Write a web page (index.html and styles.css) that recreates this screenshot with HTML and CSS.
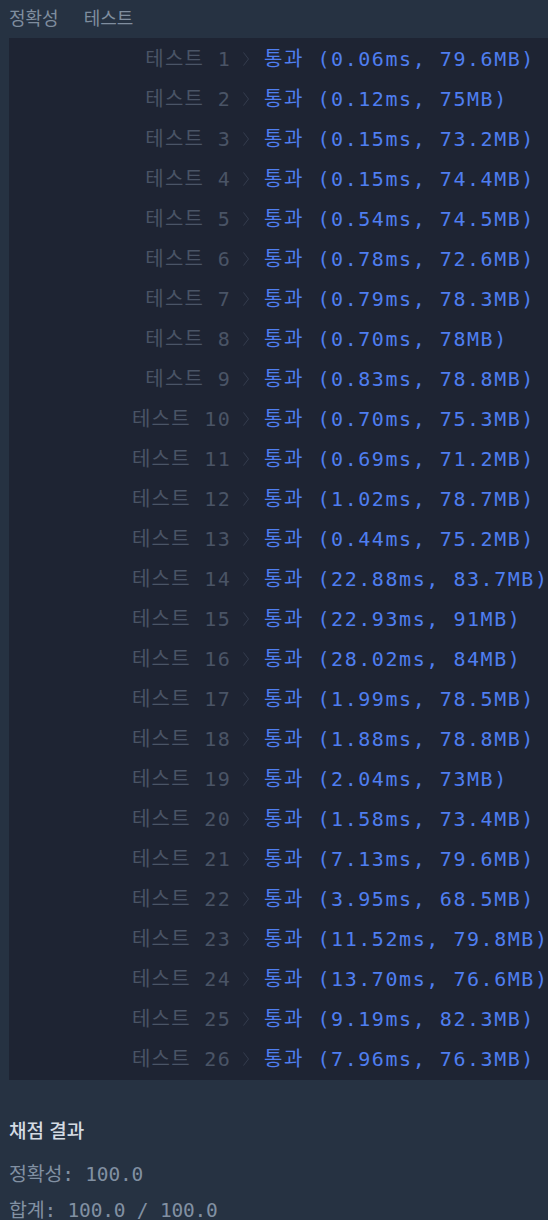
FILE: index.html
```html
<!DOCTYPE html>
<html lang="ko">
<head>
    <meta charset="UTF-8">
    <meta name="viewport" content="width=device-width, initial-scale=1.0">
    <title>채점 결과</title>
    <link rel="stylesheet" href="styles.css">
</head>
<body>

    <nav class="tabs">
        <span class="tab">정확성</span>
        <span class="tab">테스트</span>
    </nav>

    <section class="console">
        <div class="row"><span class="case">테스트 1</span><span class="arrow"><svg viewBox="0 0 6 14"><polyline points="0.5,0.5 5.5,7 0.5,13.5"/></svg></span><span class="result">통과 (0.06ms, 79.6MB)</span></div>
        <div class="row"><span class="case">테스트 2</span><span class="arrow"><svg viewBox="0 0 6 14"><polyline points="0.5,0.5 5.5,7 0.5,13.5"/></svg></span><span class="result">통과 (0.12ms, 75MB)</span></div>
        <div class="row"><span class="case">테스트 3</span><span class="arrow"><svg viewBox="0 0 6 14"><polyline points="0.5,0.5 5.5,7 0.5,13.5"/></svg></span><span class="result">통과 (0.15ms, 73.2MB)</span></div>
        <div class="row"><span class="case">테스트 4</span><span class="arrow"><svg viewBox="0 0 6 14"><polyline points="0.5,0.5 5.5,7 0.5,13.5"/></svg></span><span class="result">통과 (0.15ms, 74.4MB)</span></div>
        <div class="row"><span class="case">테스트 5</span><span class="arrow"><svg viewBox="0 0 6 14"><polyline points="0.5,0.5 5.5,7 0.5,13.5"/></svg></span><span class="result">통과 (0.54ms, 74.5MB)</span></div>
        <div class="row"><span class="case">테스트 6</span><span class="arrow"><svg viewBox="0 0 6 14"><polyline points="0.5,0.5 5.5,7 0.5,13.5"/></svg></span><span class="result">통과 (0.78ms, 72.6MB)</span></div>
        <div class="row"><span class="case">테스트 7</span><span class="arrow"><svg viewBox="0 0 6 14"><polyline points="0.5,0.5 5.5,7 0.5,13.5"/></svg></span><span class="result">통과 (0.79ms, 78.3MB)</span></div>
        <div class="row"><span class="case">테스트 8</span><span class="arrow"><svg viewBox="0 0 6 14"><polyline points="0.5,0.5 5.5,7 0.5,13.5"/></svg></span><span class="result">통과 (0.70ms, 78MB)</span></div>
        <div class="row"><span class="case">테스트 9</span><span class="arrow"><svg viewBox="0 0 6 14"><polyline points="0.5,0.5 5.5,7 0.5,13.5"/></svg></span><span class="result">통과 (0.83ms, 78.8MB)</span></div>
        <div class="row"><span class="case">테스트 10</span><span class="arrow"><svg viewBox="0 0 6 14"><polyline points="0.5,0.5 5.5,7 0.5,13.5"/></svg></span><span class="result">통과 (0.70ms, 75.3MB)</span></div>
        <div class="row"><span class="case">테스트 11</span><span class="arrow"><svg viewBox="0 0 6 14"><polyline points="0.5,0.5 5.5,7 0.5,13.5"/></svg></span><span class="result">통과 (0.69ms, 71.2MB)</span></div>
        <div class="row"><span class="case">테스트 12</span><span class="arrow"><svg viewBox="0 0 6 14"><polyline points="0.5,0.5 5.5,7 0.5,13.5"/></svg></span><span class="result">통과 (1.02ms, 78.7MB)</span></div>
        <div class="row"><span class="case">테스트 13</span><span class="arrow"><svg viewBox="0 0 6 14"><polyline points="0.5,0.5 5.5,7 0.5,13.5"/></svg></span><span class="result">통과 (0.44ms, 75.2MB)</span></div>
        <div class="row"><span class="case">테스트 14</span><span class="arrow"><svg viewBox="0 0 6 14"><polyline points="0.5,0.5 5.5,7 0.5,13.5"/></svg></span><span class="result">통과 (22.88ms, 83.7MB)</span></div>
        <div class="row"><span class="case">테스트 15</span><span class="arrow"><svg viewBox="0 0 6 14"><polyline points="0.5,0.5 5.5,7 0.5,13.5"/></svg></span><span class="result">통과 (22.93ms, 91MB)</span></div>
        <div class="row"><span class="case">테스트 16</span><span class="arrow"><svg viewBox="0 0 6 14"><polyline points="0.5,0.5 5.5,7 0.5,13.5"/></svg></span><span class="result">통과 (28.02ms, 84MB)</span></div>
        <div class="row"><span class="case">테스트 17</span><span class="arrow"><svg viewBox="0 0 6 14"><polyline points="0.5,0.5 5.5,7 0.5,13.5"/></svg></span><span class="result">통과 (1.99ms, 78.5MB)</span></div>
        <div class="row"><span class="case">테스트 18</span><span class="arrow"><svg viewBox="0 0 6 14"><polyline points="0.5,0.5 5.5,7 0.5,13.5"/></svg></span><span class="result">통과 (1.88ms, 78.8MB)</span></div>
        <div class="row"><span class="case">테스트 19</span><span class="arrow"><svg viewBox="0 0 6 14"><polyline points="0.5,0.5 5.5,7 0.5,13.5"/></svg></span><span class="result">통과 (2.04ms, 73MB)</span></div>
        <div class="row"><span class="case">테스트 20</span><span class="arrow"><svg viewBox="0 0 6 14"><polyline points="0.5,0.5 5.5,7 0.5,13.5"/></svg></span><span class="result">통과 (1.58ms, 73.4MB)</span></div>
        <div class="row"><span class="case">테스트 21</span><span class="arrow"><svg viewBox="0 0 6 14"><polyline points="0.5,0.5 5.5,7 0.5,13.5"/></svg></span><span class="result">통과 (7.13ms, 79.6MB)</span></div>
        <div class="row"><span class="case">테스트 22</span><span class="arrow"><svg viewBox="0 0 6 14"><polyline points="0.5,0.5 5.5,7 0.5,13.5"/></svg></span><span class="result">통과 (3.95ms, 68.5MB)</span></div>
        <div class="row"><span class="case">테스트 23</span><span class="arrow"><svg viewBox="0 0 6 14"><polyline points="0.5,0.5 5.5,7 0.5,13.5"/></svg></span><span class="result">통과 (11.52ms, 79.8MB)</span></div>
        <div class="row"><span class="case">테스트 24</span><span class="arrow"><svg viewBox="0 0 6 14"><polyline points="0.5,0.5 5.5,7 0.5,13.5"/></svg></span><span class="result">통과 (13.70ms, 76.6MB)</span></div>
        <div class="row"><span class="case">테스트 25</span><span class="arrow"><svg viewBox="0 0 6 14"><polyline points="0.5,0.5 5.5,7 0.5,13.5"/></svg></span><span class="result">통과 (9.19ms, 82.3MB)</span></div>
        <div class="row"><span class="case">테스트 26</span><span class="arrow"><svg viewBox="0 0 6 14"><polyline points="0.5,0.5 5.5,7 0.5,13.5"/></svg></span><span class="result">통과 (7.96ms, 76.3MB)</span></div>
    </section>

    <section class="summary">
        <h3 class="summary-title">채점 결과</h3>
        <p class="summary-line">정확성: 100.0</p>
        <p class="summary-line">합계: 100.0 / 100.0</p>
    </section>

</body>
</html>
```

FILE: styles.css
```css
/* General Styles */
body {
    font-family: "Noto Sans CJK KR", "Noto Sans", sans-serif;
    margin: 0;
    padding: 0;
    background-color: #263242;
    overflow: hidden;
}

/* Tabs */
.tabs {
    display: flex;
    gap: 25px;
    height: 38px;
    padding: 0 9px 5px;
    align-items: center;
    box-sizing: border-box;
}
.tab {
    color: #7f8d9e;
    font-size: 18px;
}

/* Console output */
.console {
    margin-left: 9px;
    padding: 1px 0;
    background: #1e2433;
    font-family: "DejaVu Sans Mono", "Noto Sans CJK KR", monospace;
    font-size: 20px;
    letter-spacing: 1.3px;
}
.row {
    display: grid;
    grid-template-columns: 222px 33px auto;
    height: 40px;
    line-height: 40px;
    white-space: nowrap;
}
.case {
    text-align: right;
    color: #4a5466;
}
.arrow {
    display: flex;
    align-items: center;
    padding-left: 12px;
}
.arrow svg {
    width: 6px;
    height: 14px;
    fill: none;
    stroke: #353d4e;
    stroke-width: 1;
}
.result {
    color: #4f7ef0;
    letter-spacing: 1.55px;
}

/* Summary */
.summary {
    padding: 36px 9px 0;
}
.summary-title {
    margin: 0 0 13px;
    color: #d4dbe3;
    font-size: 19px;
    font-weight: 500;
    line-height: 28px;
}
.summary-line {
    margin: 0;
    color: #8190a2;
    font-family: "DejaVu Sans Mono", "Noto Sans CJK KR", monospace;
    font-size: 19.5px;
    letter-spacing: -0.2px;
    line-height: 36px;
}
```
